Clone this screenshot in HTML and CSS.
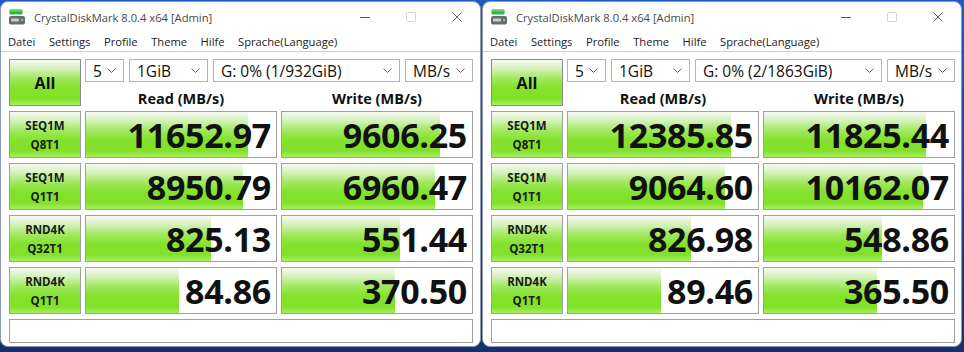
FILE: index.html
```html
<!DOCTYPE html>
<html lang="de">
<head>
    <meta charset="UTF-8">
    <title>CrystalDiskMark 8.0.4 x64 [Admin]</title>
    <link rel="stylesheet" href="styles.css">
</head>
<body>
    <div class="desktop">
        <!-- Window 1 -->
        <div class="window">
            <div class="titlebar">
                <svg class="app-icon" width="16" height="16" viewBox="0 0 16 16">
                    <rect x="0.5" y="0.5" width="13" height="5" rx="1" fill="#2fb545"/>
                    <rect x="0.5" y="0.5" width="13" height="2" rx="1" fill="#5fd86a"/>
                    <rect x="0" y="7" width="16" height="8.5" rx="2" fill="#6a6d70"/>
                    <rect x="2" y="9.5" width="8" height="3" rx="1" fill="#c9cccf"/>
                    <rect x="12" y="10" width="2" height="2" fill="#7fe24a"/>
                </svg>
                <span class="title">CrystalDiskMark 8.0.4 x64 [Admin]</span>
                <div class="controls">
                    <span class="ctl"><svg width="10" height="10" viewBox="0 0 10 10"><line x1="0" y1="5.5" x2="10" y2="5.5" stroke="#555" stroke-width="1"/></svg></span>
                    <span class="ctl"><svg width="10" height="10" viewBox="0 0 10 10"><rect x="0.5" y="0.5" width="9" height="9" rx="1" fill="none" stroke="#d2d2d2" stroke-width="1"/></svg></span>
                    <span class="ctl"><svg width="10" height="10" viewBox="0 0 10 10"><path d="M0.5 0.5 L9.5 9.5 M9.5 0.5 L0.5 9.5" stroke="#666" stroke-width="1"/></svg></span>
                </div>
            </div>
            <div class="menubar">
                <span>Datei</span><span>Settings</span><span>Profile</span><span>Theme</span><span>Hilfe</span><span>Sprache(Language)</span>
            </div>
            <div class="client">
                <div class="all-btn">All</div>
                <div class="top-right">
                    <div class="combos">
                        <div class="combo w-count">5<svg class="chev" width="9" height="5" viewBox="0 0 9 5"><polyline points="0.5,0.5 4.5,4.5 8.5,0.5" fill="none" stroke="#666" stroke-width="1"/></svg></div>
                        <div class="combo w-size">1GiB<svg class="chev" width="9" height="5" viewBox="0 0 9 5"><polyline points="0.5,0.5 4.5,4.5 8.5,0.5" fill="none" stroke="#666" stroke-width="1"/></svg></div>
                        <div class="combo w-drive">G: 0% (1/932GiB)<svg class="chev" width="9" height="5" viewBox="0 0 9 5"><polyline points="0.5,0.5 4.5,4.5 8.5,0.5" fill="none" stroke="#666" stroke-width="1"/></svg></div>
                        <div class="combo w-unit">MB/s<svg class="chev" width="9" height="5" viewBox="0 0 9 5"><polyline points="0.5,0.5 4.5,4.5 8.5,0.5" fill="none" stroke="#666" stroke-width="1"/></svg></div>
                    </div>
                    <div class="headers">
                        <span>Read (MB/s)</span><span>Write (MB/s)</span>
                    </div>
                </div>

                <div class="label">SEQ1M<br>Q8T1</div>
                <div class="result" style="--w:162px">11652.97</div>
                <div class="result" style="--w:158px">9606.25</div>

                <div class="label">SEQ1M<br>Q1T1</div>
                <div class="result" style="--w:157px">8950.79</div>
                <div class="result" style="--w:153px">6960.47</div>

                <div class="label">RND4K<br>Q32T1</div>
                <div class="result" style="--w:125px">825.13</div>
                <div class="result" style="--w:118px">551.44</div>

                <div class="label">RND4K<br>Q1T1</div>
                <div class="result" style="--w:93px">84.86</div>
                <div class="result" style="--w:113px">370.50</div>

                <div class="status"></div>
            </div>
        </div>

        <!-- Window 2 -->
        <div class="window">
            <div class="titlebar">
                <svg class="app-icon" width="16" height="16" viewBox="0 0 16 16">
                    <rect x="0.5" y="0.5" width="13" height="5" rx="1" fill="#2fb545"/>
                    <rect x="0.5" y="0.5" width="13" height="2" rx="1" fill="#5fd86a"/>
                    <rect x="0" y="7" width="16" height="8.5" rx="2" fill="#6a6d70"/>
                    <rect x="2" y="9.5" width="8" height="3" rx="1" fill="#c9cccf"/>
                    <rect x="12" y="10" width="2" height="2" fill="#7fe24a"/>
                </svg>
                <span class="title">CrystalDiskMark 8.0.4 x64 [Admin]</span>
                <div class="controls">
                    <span class="ctl"><svg width="10" height="10" viewBox="0 0 10 10"><line x1="0" y1="5.5" x2="10" y2="5.5" stroke="#555" stroke-width="1"/></svg></span>
                    <span class="ctl"><svg width="10" height="10" viewBox="0 0 10 10"><rect x="0.5" y="0.5" width="9" height="9" rx="1" fill="none" stroke="#d2d2d2" stroke-width="1"/></svg></span>
                    <span class="ctl"><svg width="10" height="10" viewBox="0 0 10 10"><path d="M0.5 0.5 L9.5 9.5 M9.5 0.5 L0.5 9.5" stroke="#666" stroke-width="1"/></svg></span>
                </div>
            </div>
            <div class="menubar">
                <span>Datei</span><span>Settings</span><span>Profile</span><span>Theme</span><span>Hilfe</span><span>Sprache(Language)</span>
            </div>
            <div class="client">
                <div class="all-btn">All</div>
                <div class="top-right">
                    <div class="combos">
                        <div class="combo w-count">5<svg class="chev" width="9" height="5" viewBox="0 0 9 5"><polyline points="0.5,0.5 4.5,4.5 8.5,0.5" fill="none" stroke="#666" stroke-width="1"/></svg></div>
                        <div class="combo w-size">1GiB<svg class="chev" width="9" height="5" viewBox="0 0 9 5"><polyline points="0.5,0.5 4.5,4.5 8.5,0.5" fill="none" stroke="#666" stroke-width="1"/></svg></div>
                        <div class="combo w-drive">G: 0% (2/1863GiB)<svg class="chev" width="9" height="5" viewBox="0 0 9 5"><polyline points="0.5,0.5 4.5,4.5 8.5,0.5" fill="none" stroke="#666" stroke-width="1"/></svg></div>
                        <div class="combo w-unit">MB/s<svg class="chev" width="9" height="5" viewBox="0 0 9 5"><polyline points="0.5,0.5 4.5,4.5 8.5,0.5" fill="none" stroke="#666" stroke-width="1"/></svg></div>
                    </div>
                    <div class="headers">
                        <span>Read (MB/s)</span><span>Write (MB/s)</span>
                    </div>
                </div>

                <div class="label">SEQ1M<br>Q8T1</div>
                <div class="result" style="--w:163px">12385.85</div>
                <div class="result" style="--w:162px">11825.44</div>

                <div class="label">SEQ1M<br>Q1T1</div>
                <div class="result" style="--w:157px">9064.60</div>
                <div class="result" style="--w:159px">10162.07</div>

                <div class="label">RND4K<br>Q32T1</div>
                <div class="result" style="--w:123px">826.98</div>
                <div class="result" style="--w:118px">548.86</div>

                <div class="label">RND4K<br>Q1T1</div>
                <div class="result" style="--w:93px">89.46</div>
                <div class="result" style="--w:113px">365.50</div>

                <div class="status"></div>
            </div>
        </div>
    </div>
</body>
</html>
```

FILE: styles.css
```css
/* CrystalDiskMark side by side */
:root {
    --desk-blue: #1f5bc4;
    --desk-dark: #16306e;
    --box-border: #a0a0a0;
    --text-dark: #111;
    --green-fill: linear-gradient(to bottom,
        #f6faf3 0%,
        #d6f2bf 18%,
        #9fe85c 42%,
        #84e22c 62%,
        #82e02a 86%,
        #a6ee62 100%);
}

* {
    margin: 0;
    padding: 0;
    box-sizing: border-box;
}

body {
    width: 964px;
    height: 352px;
    overflow: hidden;
    background: linear-gradient(to bottom, var(--desk-blue), var(--desk-dark));
    font-family: 'Open Sans', 'Noto Sans', sans-serif;
    color: var(--text-dark);
}

.desktop {
    display: flex;
    gap: 1px;
    padding-top: 1px;
}

/* Window frame */
.window {
    width: 481px;
    height: 346px;
    background: #fff;
    border: 1px solid #8f9bb3;
    border-radius: 8px;
    overflow: hidden;
}

.window + .window {
    width: 480px;
}

.titlebar {
    height: 30px;
    display: flex;
    align-items: center;
    padding-left: 8px;
}

.app-icon {
    margin-right: 9px;
    flex: none;
}

.title {
    font-size: 11.2px;
    color: #4a4a4a;
    flex: 1;
    white-space: nowrap;
}

.controls {
    display: flex;
    height: 100%;
}

.ctl {
    width: 46px;
    display: flex;
    align-items: center;
    justify-content: center;
}

.menubar {
    height: 20px;
    display: flex;
    align-items: center;
    gap: 13.5px;
    padding-left: 7px;
    font-size: 11.2px;
    color: #222;
    border-bottom: 1px solid #cfcfcf;
}

/* Client area */
.client {
    display: grid;
    grid-template-columns: 72px 192px 192px;
    grid-template-rows: 47px repeat(4, 47px) 24px;
    column-gap: 4px;
    row-gap: 5px;
    padding: 7px 8px 0 8px;
}

.all-btn {
    border: 1px solid #8c8c8c;
    background: var(--green-fill);
    display: flex;
    align-items: center;
    justify-content: center;
    font-size: 16px;
    font-weight: 700;
}

.top-right {
    grid-column: 2 / 4;
    display: flex;
    flex-direction: column;
}

.combos {
    display: flex;
    gap: 5px;
    height: 23px;
}

.combo {
    border: 1px solid #b4b4b4;
    background: #fff;
    display: flex;
    align-items: center;
    justify-content: space-between;
    padding: 0 7px 0 7px;
    font-size: 15.5px;
    white-space: nowrap;
}

.chev {
    flex: none;
}

.w-count { width: 39px; }
.w-size { width: 79px; }
.w-drive { width: 187px; }
.w-unit { width: 68px; }

.headers {
    display: grid;
    grid-template-columns: 192px 192px;
    column-gap: 4px;
    flex: 1;
    align-items: end;
    font-size: 14.5px;
    font-weight: 700;
    text-align: center;
    line-height: 18px;
    margin-bottom: -2px;
}

.label {
    border: 1px solid var(--box-border);
    background: var(--green-fill);
    text-align: center;
    font-size: 11.5px;
    font-weight: 700;
    line-height: 19px;
    padding-top: 4px;
    color: #1a1a1a;
}

.result {
    border: 1px solid var(--box-border);
    background-color: #fff;
    background-image: var(--green-fill);
    background-repeat: no-repeat;
    background-size: var(--w) 100%;
    text-align: right;
    padding-right: 5px;
    font-size: 34px;
    font-weight: 700;
    line-height: 47px;
    letter-spacing: -0.3px;
}

.status {
    grid-column: 1 / -1;
    border: 1px solid var(--box-border);
    background: #fff;
}
```
